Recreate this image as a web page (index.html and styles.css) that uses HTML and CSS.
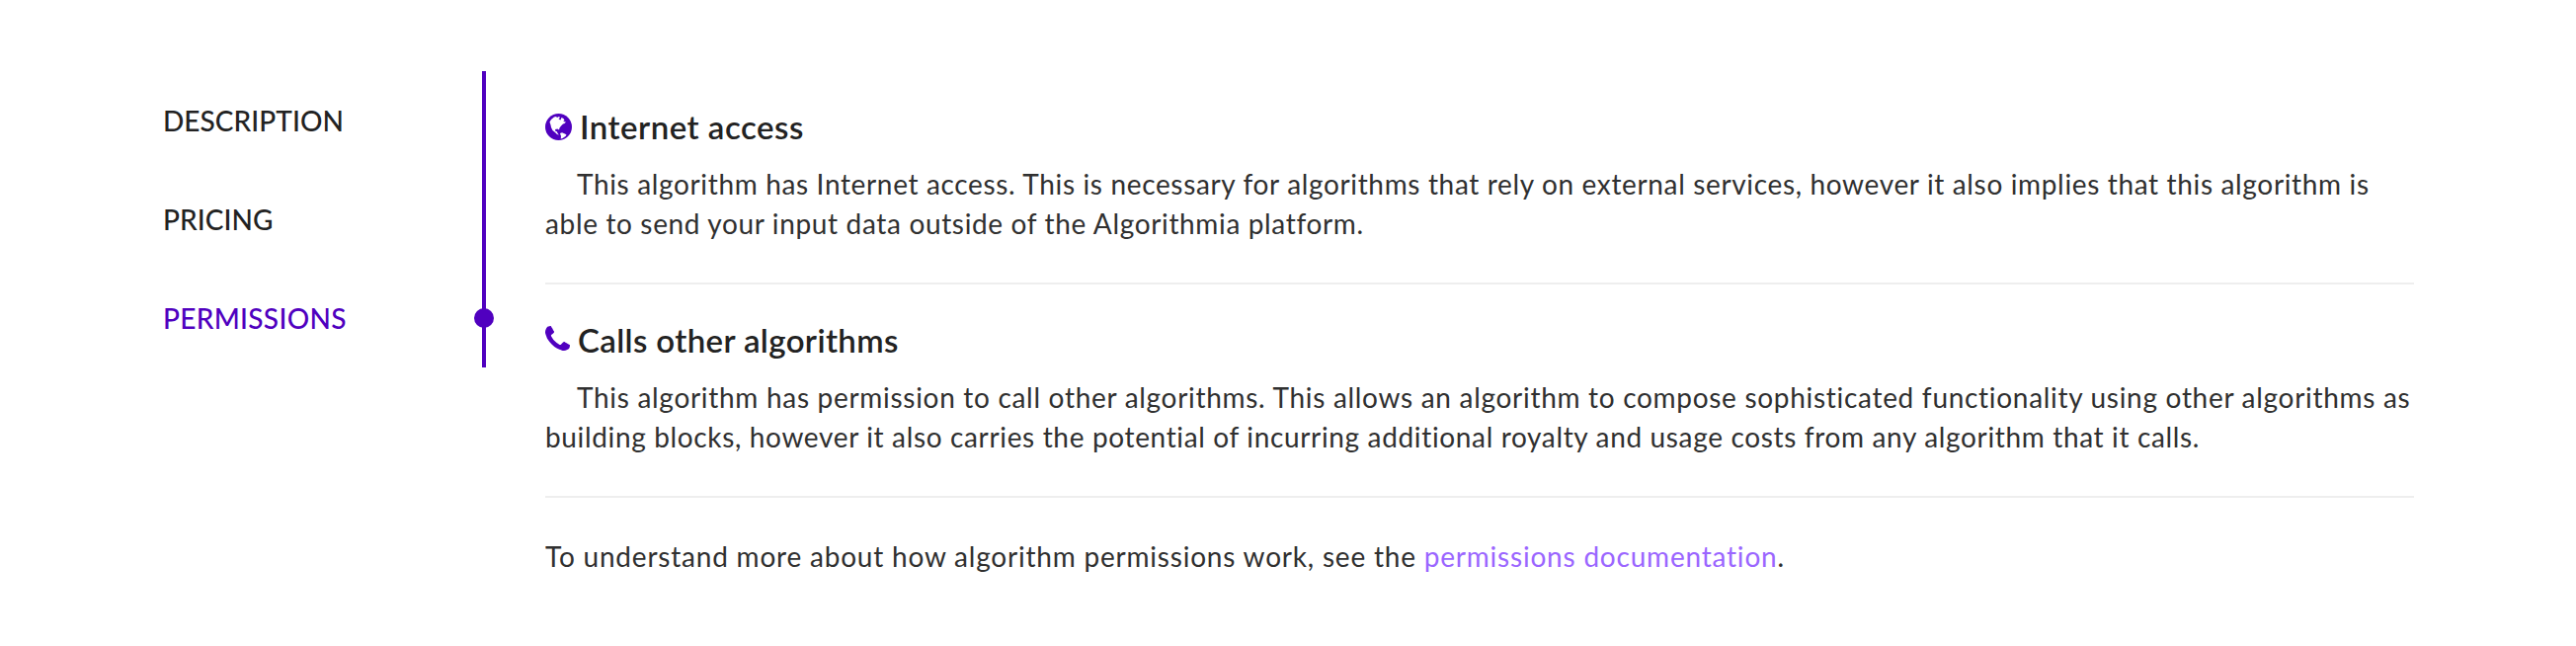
FILE: index.html
```
<!DOCTYPE html>
<html lang="en">
<head>
<meta charset="utf-8">
<title>Permissions</title>
<link rel="stylesheet" href="styles.css">
</head>
<body>
<div class="page">
  <nav class="tabs">
    <a class="tab"><span>DESCRIPTION</span></a>
    <a class="tab"><span>PRICING</span></a>
    <a class="tab active"><span>PERMISSIONS</span></a>
  </nav>
  <main class="content">
    <section class="permission">
      <h2 class="title title-internet"><svg class="icon globe" viewBox="0 0 27 27"><circle cx="13.5" cy="13.5" r="13.5" fill="#5000bf"/><path fill="#fff" d="M4.500 8.500L6 6l3-2.500 2-.5 1 1 2-1 1 1-1.500 1.500 2 1 1-2.500 2 1 1 2-1.500 1 3 .5-1.500 1.500-1.500.5-2 2-1.500 2-.5 2-1.500-1-2.500.5.500 2 1.500.3.5 1.700 1.500 1.500-2-.5-2-2-2.500-2-1.500-3-.5-2.500z"/><path fill="#fff" d="M15 20l2-.8 3 1.300 1.500 1-1 1.500-3 2-1.800.5.300-2.500z"/></svg><span>Internet access</span></h2>
      <p class="text"><span class="line first">This algorithm has Internet access. This is necessary for algorithms that rely on external services, however it also implies that this algorithm is</span> <span class="line">able to send your input data outside of the Algorithmia platform.</span></p>
    </section>
    <section class="permission">
      <h2 class="title title-calls"><svg class="icon phone" viewBox="0 0 1408 1408"><path fill="#5000bf" d="M1408 1112q0 27-10 70.500t-21 68.500q-21 50-122 106-94 51-186 51-27 0-53-3.500t-57-12.500-47-14.500-55.500-20.500-49.500-18q-98-35-175-83-127-79-264-216t-216-264q-48-77-83-175-3-9-18-49.500t-20.500-55.500-14.500-47-12.500-57-3.500-53q0-92 51-186 56-101 106-122 25-11 68.500-21t70.500-10q14 0 21 3 18 6 53 76 11 19 30 54t35 63.500 31 53.500q3 4 17.500 25t21.500 35.500 7 28.500q0 20-28.500 50t-62 55-62 53-28.500 46q0 9 5 22.500t8.500 20.500 14 24 11.500 19q76 137 174 235t235 174q2 1 19 11.500t24 14 20.500 8.500 22.500 5q18 0 46-28.500t53-62 55-62 50-28.500q14 0 28.500 7t35.500 21.500 25 17.500q25 15 53.500 31t63.500 35 54 30q70 35 76 53 3 7 3 21z"/></svg><span>Calls other algorithms</span></h2>
      <p class="text"><span class="line first wide">This algorithm has permission to call other algorithms. This allows an algorithm to compose sophisticated functionality using other algorithms as</span> <span class="line">building blocks, however it also carries the potential of incurring additional royalty and usage costs from any algorithm that it calls.</span></p>
    </section>
    <p class="text note"><span class="line wider">To understand more about how algorithm permissions work, see the <a class="link">permissions documentation</a>.</span></p>
  </main>
</div>
</body>
</html>
```
FILE: styles.css
```
body { margin: 0; background: #fff; color: #222; font-family: Lato, sans-serif; font-size: 28px; }
.page { display: flex; padding: 72px 164px 0 165px; }
.tabs { width: 323px; height: 300px; border-right: 4px solid #5000bf; }
.tab { display: flex; align-items: center; height: 100px; position: relative; color: #222; font-weight: 500; letter-spacing: 0.05px; }
.tab.active { color: #5000bf; letter-spacing: 0.3px; }
.tab.active::after { content: ""; position: absolute; right: -12px; top: 40px; width: 20px; height: 20px; border-radius: 50%; background: #5000bf; }
.content { flex: 1; padding: 34px 0 0 60px; }
.permission { height: 180px; border-bottom: 2px solid #eee; margin-bottom: 34px; }
.title { display: flex; align-items: center; height: 44px; margin: 0 0 16px; font-size: 33px; font-weight: 600; letter-spacing: 0.37px; }
.title-internet { letter-spacing: 0.5px; }
.icon { flex: none; }
.globe { width: 27px; height: 27px; margin-right: 8px; }
.phone { width: 25px; height: 25px; margin: 0 8px 3px 0; }
.text { margin: 0; line-height: 40px; font-weight: 400; color: #303030; }
.note { padding-top: 5px; }
.line { display: block; white-space: nowrap; letter-spacing: 0.65px; }
.wide { letter-spacing: 0.7px; }
.wider { letter-spacing: 0.79px; }
.first { padding-left: 32px; }
.link { color: #9b66ff; }
```
